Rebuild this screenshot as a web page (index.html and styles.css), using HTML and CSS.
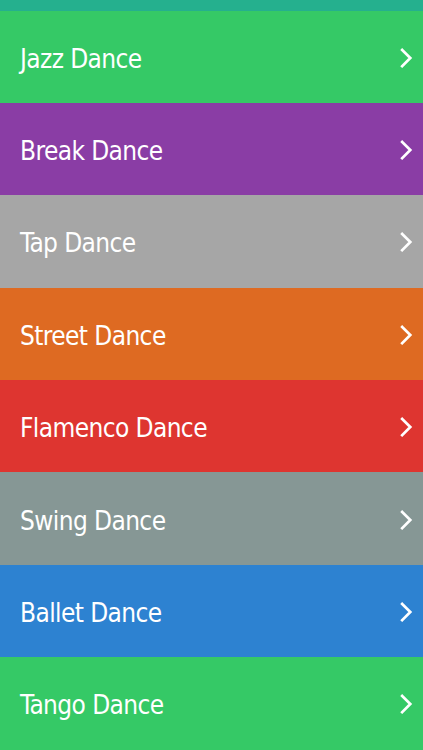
FILE: index.html
```html
<!DOCTYPE html>
<html lang="en">
<head>
    <meta charset="UTF-8">
    <meta name="viewport" content="width=device-width, initial-scale=1.0">
    <title>Dance Styles</title>
    <link rel="stylesheet" href="styles.css">
</head>
<body>
    <div class="topBar"></div>
    <ul id="danceList">
        <li class="row jazz"><span class="title">Jazz Dance</span><svg class="arrow" viewBox="0 0 12 18"><path d="M2 1.5 L9.5 9 L2 16.5"/></svg></li>
        <li class="row break"><span class="title">Break Dance</span><svg class="arrow" viewBox="0 0 12 18"><path d="M2 1.5 L9.5 9 L2 16.5"/></svg></li>
        <li class="row tap"><span class="title">Tap Dance</span><svg class="arrow" viewBox="0 0 12 18"><path d="M2 1.5 L9.5 9 L2 16.5"/></svg></li>
        <li class="row street"><span class="title">Street Dance</span><svg class="arrow" viewBox="0 0 12 18"><path d="M2 1.5 L9.5 9 L2 16.5"/></svg></li>
        <li class="row flamenco"><span class="title">Flamenco Dance</span><svg class="arrow" viewBox="0 0 12 18"><path d="M2 1.5 L9.5 9 L2 16.5"/></svg></li>
        <li class="row swing"><span class="title">Swing Dance</span><svg class="arrow" viewBox="0 0 12 18"><path d="M2 1.5 L9.5 9 L2 16.5"/></svg></li>
        <li class="row ballet"><span class="title">Ballet Dance</span><svg class="arrow" viewBox="0 0 12 18"><path d="M2 1.5 L9.5 9 L2 16.5"/></svg></li>
        <li class="row tango"><span class="title">Tango Dance</span><svg class="arrow" viewBox="0 0 12 18"><path d="M2 1.5 L9.5 9 L2 16.5"/></svg></li>
    </ul>
</body>
</html>
```

FILE: styles.css
```css
*{
    margin: 0;
    padding: 0;
    box-sizing: border-box;
}
body{
    font-family: "DejaVu Sans Condensed", "DejaVu Sans", sans-serif;
    background-color: #35c966;
    overflow: hidden;
}
.topBar{
    height: 10.5px;
    background-color: #25b08e;
}
ul{
    list-style: none;
}
.row{
    height: 92.4px;
    display: flex;
    align-items: center;
    justify-content: space-between;
    padding: 0 10px 0 20px;
    color: white;
}
.title{
    font-size: 26px;
    font-weight: normal;
    letter-spacing: -0.6px;
    padding-top: 4px;
}
.arrow{
    width: 13px;
    height: 20px;
    margin-top: 2px;
    fill: none;
    stroke: white;
    stroke-width: 2.5;
    stroke-linecap: square;
}
.jazz{ background-color: #35c966; }
.break{ background-color: #8a3da5; }
.tap{ background-color: #a6a6a6; }
.street{ background-color: #de6a22; }
.flamenco{ background-color: #de3530; }
.swing{ background-color: #869795; }
.ballet{ background-color: #2d82d1; }
.tango{ background-color: #35c966; }
```
